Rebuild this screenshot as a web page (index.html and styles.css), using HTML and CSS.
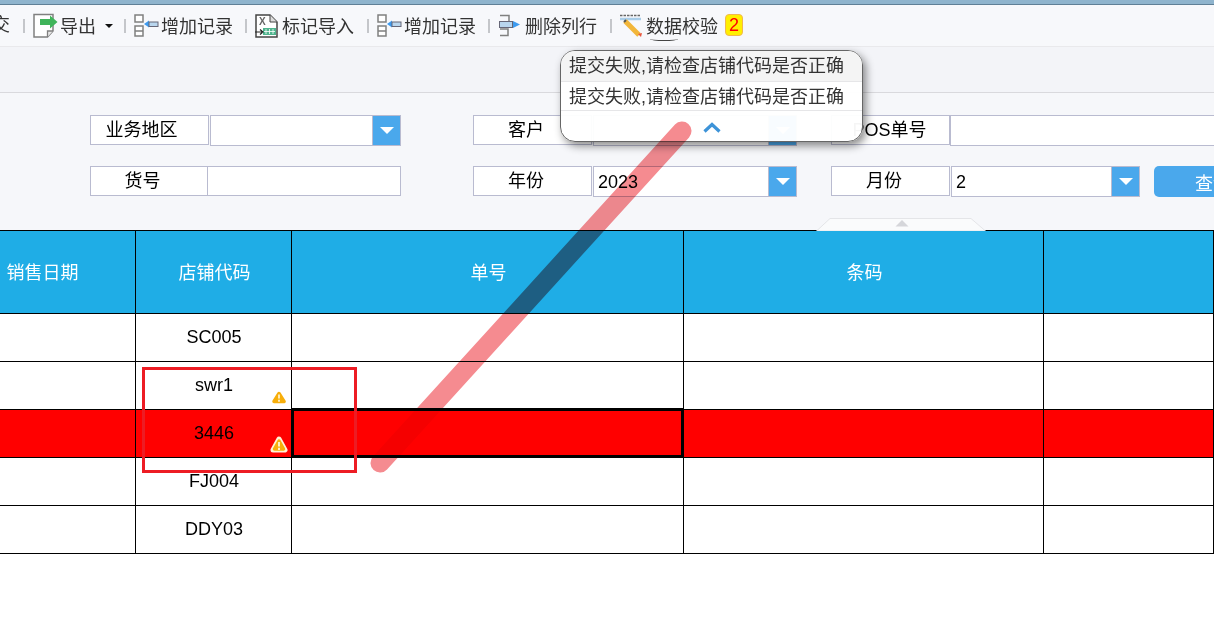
FILE: index.html
```html
<!DOCTYPE html>
<html lang="zh-CN">
<head>
<meta charset="utf-8">
<title>数据校验</title>
<link rel="stylesheet" href="styles.css">
</head>
<body>
<div class="page">
  <div class="topbar"></div>
  <div class="toolbar">
    <span class="tool-cut">交</span>
    <i class="sep"></i>
    <span class="tool tool-export">
      <svg class="ico" width="25" height="25" viewBox="0 0 25 25"><path d="M1 1.500H20V18L14.500 24H1Z" fill="#fff" stroke="#808080" stroke-width="1.500"/><path d="M20 18H14.500V24" fill="#e8e8e8" stroke="#808080" stroke-width="1.300"/><path d="M7 6H17V2.500L24.500 9L17 15.500V12H7Z" fill="#3fb45a"/></svg>
      <span>导出</span><i class="caret"></i>
    </span>
    <i class="sep sep-a"></i>
    <span class="tool tool-add">
      <svg class="ico" width="25" height="23" viewBox="0 0 25 23"><path d="M1 1H9V8H1ZM1 12H9V22H1ZM1 17H9" fill="#fff" stroke="#808080" stroke-width="1.500"/><path d="M10 10L15 6.500V13.500Z" fill="#3d9bf0"/><rect x="15" y="8" width="9" height="4.500" fill="#b9d6ee" stroke="#667" stroke-width="1"/></svg>
      <span>增加记录</span>
    </span>
    <i class="sep"></i>
    <span class="tool tool-import">
      <svg class="ico" width="23" height="24" viewBox="0 0 23 24"><path d="M1 1H15L22 8V23H1Z" fill="#fff" stroke="#444" stroke-width="1.500"/><path d="M15 1V8H22" fill="#ddd" stroke="#444"/><rect x="8" y="14" width="13" height="7" fill="#4fb48e"/><path d="M11 15V20M14.500 15V20M18 15V20M9 17.500H20" stroke="#fff" stroke-width=".8"/><path d="M0 18H7M5 15.500L8 18L5 20.500" fill="none" stroke="#222" stroke-width="1.200"/><text class="ico-x" x="4" y="11">X</text></svg>
      <span>标记导入</span>
    </span>
    <i class="sep"></i>
    <span class="tool tool-add2">
      <svg class="ico" width="25" height="23" viewBox="0 0 25 23"><path d="M1 1H9V8H1ZM1 12H9V22H1ZM1 17H9" fill="#fff" stroke="#808080" stroke-width="1.500"/><path d="M10 10L15 6.500V13.500Z" fill="#3d9bf0"/><rect x="15" y="8" width="9" height="4.500" fill="#b9d6ee" stroke="#667" stroke-width="1"/></svg>
      <span>增加记录</span>
    </span>
    <i class="sep"></i>
    <span class="tool tool-del">
      <svg class="ico" width="23" height="23" viewBox="0 0 23 23"><path d="M2 1.500H11V7M2 15H10V21.500H2" fill="none" stroke="#808080" stroke-width="1.500"/><rect x="1.500" y="7.500" width="13" height="6" fill="#b9d6ee" stroke="#667" stroke-width="1"/><path d="M15 7L22 10.500L15 14Z" fill="#3d9bf0"/></svg>
      <span>删除列行</span>
    </span>
    <i class="sep"></i>
    <span class="tool tool-check">
      <svg class="ico" width="23" height="24" viewBox="0 0 23 24"><path d="M0 1.500H21" stroke="#666" stroke-width="1.500" stroke-dasharray="2.500 1"/><path d="M0 5H21" stroke="#a9cde8" stroke-width="2.500"/><path d="M5 7L19 21" stroke="#f2b63a" stroke-width="5"/><path d="M4 8L6 6" stroke="#555" stroke-width="2"/><path d="M18 20L21 23L22 19Z" fill="#e8553f"/></svg>
      <span class="squiggle">数据校验</span>
      <b class="badge">2</b>
    </span>
  </div>
  <div class="band"></div>

  <section class="filters">
    <div class="filter-row">
      <div class="field field-a"><span class="label label-wide">业务地区</span><span class="box gap1"></span><i class="drop"></i></div>
      <div class="field field-b"><span class="label">客户</span><span class="box gap1"></span><i class="drop"></i></div>
      <div class="field field-c"><span class="label label-pos">POS单号</span><span class="box"></span></div>
    </div>
    <div class="filter-row">
      <div class="field field-a"><span class="label label-sm">货号</span><span class="box"></span></div>
      <div class="field field-b"><span class="label">年份</span><span class="box gap1">2023</span><i class="drop"></i></div>
      <div class="field field-d"><span class="label">月份</span><span class="box gap1">2</span><i class="drop"></i></div>
      <button class="query">查询</button>
    </div>
    <svg class="collapse" width="170" height="13" viewBox="0 0 170 13"><path d="M0.500 13L14 0.500H155L169.500 13Z" fill="#fafbfc" stroke="#e4e5e8"/><path d="M79.500 8.500L86 2L92.500 8.500Z" fill="#d5d6da"/></svg>
  </section>

  <div class="grid">
    <div class="row head">
      <div class="cell">销售日期</div><div class="cell">店铺代码</div><div class="cell">单号</div><div class="cell">条码</div><div class="cell"></div>
    </div>
    <div class="row">
      <div class="cell"></div><div class="cell">SC005</div><div class="cell"></div><div class="cell"></div><div class="cell"></div>
    </div>
    <div class="row">
      <div class="cell"></div>
      <div class="cell">swr1<svg class="warn warn-s" width="14" height="13" viewBox="0 0 14 13"><path d="M7 2.500L12 10.500H2Z" fill="#fbb812" stroke="#f7ae0a" stroke-width="3.500" stroke-linejoin="round"/><path d="M7 3.500V7.500M7 8.800V10.800" stroke="#fff4d8" stroke-width="1.700"/></svg></div>
      <div class="cell"></div><div class="cell"></div><div class="cell"></div>
    </div>
    <div class="row alert">
      <div class="cell"></div>
      <div class="cell">3446<svg class="warn warn-l" width="18" height="18" viewBox="0 0 18 18"><path d="M9 3L15 14H3Z" fill="#fff1d6" stroke="#fff1d6" stroke-width="5" stroke-linejoin="round"/><path d="M9 5L13.500 13H4.500Z" fill="#fbb812" stroke="#f7ae0a" stroke-width="3.500" stroke-linejoin="round"/><path d="M9 6V10.500M9 11.800V14" stroke="#fff4d8" stroke-width="1.800"/></svg></div>
      <div class="cell selected"></div><div class="cell"></div><div class="cell"></div>
    </div>
    <div class="row">
      <div class="cell"></div><div class="cell">FJ004</div><div class="cell"></div><div class="cell"></div><div class="cell"></div>
    </div>
    <div class="row">
      <div class="cell"></div><div class="cell">DDY03</div><div class="cell"></div><div class="cell"></div><div class="cell"></div>
    </div>
  </div>

  <div class="tip">
    <div class="tip-line tip-first">提交失败,请检查店铺代码是否正确</div>
    <div class="tip-line">提交失败,请检查店铺代码是否正确</div>
    <div class="tip-more"><svg width="18" height="11" viewBox="0 0 18 11"><path d="M1.500 9.500L9 2.500L16.500 9.500" fill="none" stroke="#3d93d8" stroke-width="3.200"/></svg></div>
  </div>

  <div class="redbox"></div>
  <svg class="marker" width="1214" height="625" viewBox="0 0 1214 625"><line x1="682" y1="131" x2="380" y2="463" stroke="#f58b90" stroke-width="19" stroke-linecap="round"/></svg>
</div>
</body>
</html>
```

FILE: styles.css
```css
html, body {
  margin: 0;
  padding: 0;
  height: 100%;
  overflow: hidden;
  background: #fff;
}

.page {
  position: relative;
  width: 1214px;
  height: 625px;
  overflow: hidden;
  font-family: "Liberation Sans", "Noto Sans CJK SC", sans-serif;
  font-size: 18px;
  color: #000;
}

.topbar {
  height: 4px;
  background: #8fb4cd;
  border-bottom: 1px solid #5f7f96;
}

.toolbar {
  display: flex;
  align-items: center;
  height: 41px;
  background: #f7f8fb;
  border-bottom: 1px solid #e9e9ec;
  color: #333;
  white-space: nowrap;
}

.tool-cut {
  margin-left: -8px;
  margin-bottom: 2px;
  width: 18px;
  line-height: 24px;
}

.sep {
  flex: none;
  width: 2px;
  height: 14px;
  margin: 0 8px 0 14px;
  background: #c4c6ca;
}
.toolbar .sep:first-of-type { margin-left: 13px; margin-right: 8px; }
.sep-a { margin-left: 11px; margin-right: 8px; }

.tool {
  display: flex;
  align-items: center;
  flex: none;
}
.tool > span { margin-bottom: 2px; }
.tool-export { width: 80px; gap: 2px; }
.tool-add { width: 97px; gap: 2px; }
.tool-import { width: 98px; gap: 4px; }
.tool-add2 { width: 97px; gap: 2px; }
.tool-del { width: 98px; gap: 4px; }
.tool-check { gap: 3px; }

.ico { flex: none; display: block; }
.ico-x {
  font-family: "Liberation Sans", sans-serif;
  font-size: 10px;
  font-weight: bold;
  fill: #666;
}

.caret {
  margin-left: 7px;
  border-style: solid;
  border-width: 4px 4px 0;
  border-color: #111 transparent transparent;
}

.squiggle { position: relative; }
.squiggle::after {
  content: "";
  position: absolute;
  left: 4px;
  bottom: -3px;
  width: 28px;
  height: 3px;
  border-bottom: 1px solid #444;
  border-radius: 50%;
}

.badge {
  margin-left: 4px;
  margin-bottom: 1px;
  width: 16px;
  height: 20px;
  line-height: 20px;
  text-align: center;
  font-weight: normal;
  color: #f00;
  background: #ffef00;
  border: 1px solid #f2b84c;
  border-radius: 4px;
}

.band {
  height: 45px;
  background: #f3f4f8;
  border-bottom: 1px solid #d9d9dd;
}

.filters {
  position: relative;
  height: 137px;
  box-sizing: border-box;
  padding: 22px 0 0 90px;
  background: #f6f7fa;
}

.filter-row {
  display: flex;
  height: 30px;
  margin-bottom: 21px;
}

.field {
  display: flex;
  flex: none;
  height: 30px;
}
.field-a { width: 311px; margin-right: 72px; }
.field-b { width: 324px; margin-right: 34px; }
.field-c { width: 400px; }
.field-d { width: 309px; margin-right: 14px; }

.label {
  flex: none;
  box-sizing: border-box;
  width: 119px;
  height: 30px;
  padding-right: 13px;
  line-height: 28px;
  text-align: center;
  background: #fff;
  border: 1px solid #b9bbd0;
}
.label-wide { padding-right: 16px; }
.label-pos { padding-right: 2px; }
.label-sm { width: 118px; }

.box {
  flex: 1;
  box-sizing: border-box;
  height: 31px;
  padding-left: 4px;
  line-height: 31px;
  background: #fff;
  border: 1px solid #b9bbd0;
}
.gap1 { margin-left: 1px; }
.label-sm + .box { height: 30px; border-left: 0; }

.drop {
  position: relative;
  flex: none;
  box-sizing: border-box;
  width: 29px;
  height: 31px;
  margin-left: -1px;
  background: #4aa8ec;
  border: 1px solid #b9bbd0;
}
.drop::after {
  content: "";
  position: absolute;
  left: 7px;
  top: 11px;
  border-style: solid;
  border-width: 7px 7px 0;
  border-color: #fff transparent transparent;
}

.query {
  flex: none;
  width: 118px;
  height: 31px;
  padding: 0;
  font: inherit;
  color: #fff;
  background: #4aa8ec;
  border: 0;
  border-radius: 5px;
  text-align: center;
}

.collapse {
  position: absolute;
  left: 816px;
  top: 125px;
}

.grid {
  border-top: 1px solid #000;
}

.row {
  display: grid;
  grid-template-columns: 136px 156px 392px 360px 170px;
  height: 48px;
  box-sizing: border-box;
  border-bottom: 1px solid #000;
  background: #fff;
}

.head {
  height: 83px;
  color: #fff;
  background: #1fade6;
}
.alert { background: #f00; }

.cell {
  position: relative;
  box-sizing: border-box;
  padding-left: 1px;
  border-right: 1px solid #000;
  display: flex;
  align-items: center;
  justify-content: center;
}
.head .cell { padding: 0 0 3px 2px; }
.head .cell:first-child { padding: 0 50px 3px 0; }
.selected {
  border: 3px solid #000;
  margin: -2px 0 -1px -1px;
}

.warn { position: absolute; }
.warn-s { right: 5px; bottom: 5px; }
.warn-l { right: 3px; bottom: 3px; }

.tip {
  position: absolute;
  left: 560px;
  top: 50px;
  width: 303px;
  height: 92px;
  box-sizing: border-box;
  overflow: hidden;
  color: #333;
  background: rgba(255, 255, 255, 0.96);
  border: 1px solid #666;
  border-radius: 15px;
  box-shadow: 3px 4px 9px rgba(0, 0, 0, 0.45);
}
.tip-line {
  height: 29px;
  padding-left: 8px;
  line-height: 30px;
  border-bottom: 1px solid #e6e6e8;
  box-sizing: border-box;
  white-space: nowrap;
}
.tip-first { height: 31px; background: #f4f4f4; }
.tip-more {
  display: flex;
  justify-content: center;
  padding-top: 11px;
}

.redbox {
  position: absolute;
  left: 142px;
  top: 367px;
  width: 215px;
  height: 106px;
  box-sizing: border-box;
  border: 3px solid #ed1c24;
}

.marker {
  position: absolute;
  left: 0;
  top: 0;
  mix-blend-mode: multiply;
  pointer-events: none;
}
```
